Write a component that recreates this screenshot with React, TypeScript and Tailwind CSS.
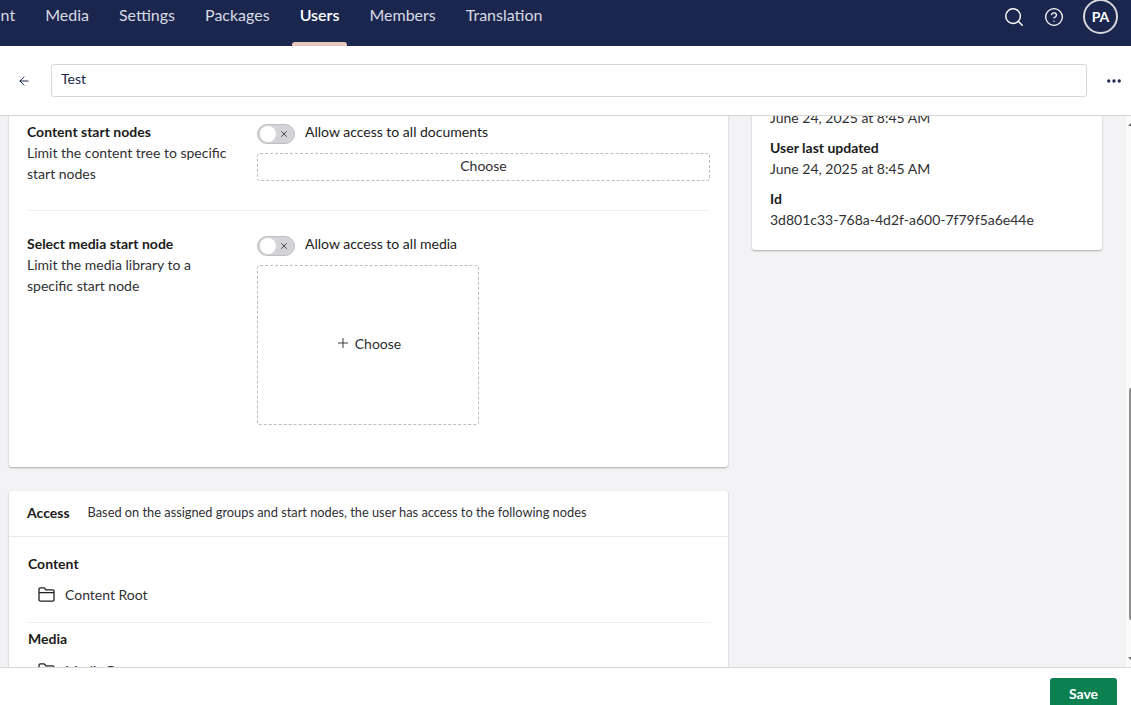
import { ArrowLeft, Ellipsis, CircleHelp, Search, Plus, X } from "lucide-react";

const tabs = ["Content", "Media", "Settings", "Packages", "Users", "Members", "Translation"];

function FolderIcon() {
  return (
    <svg width="17" height="15" viewBox="0 0 18 16" fill="none" strokeWidth="1.4" strokeLinejoin="round" className="shrink-0">
      <path d="M1 13.5V2.5A1.5 1.5 0 0 1 2.5 1h3.6c.5 0 .9.2 1.2.6L8.4 3h7.1A1.5 1.5 0 0 1 17 4.5v9a1.5 1.5 0 0 1-1.5 1.5h-13A1.5 1.5 0 0 1 1 13.5Z" stroke="#222" />
      <path d="M1 6h16" stroke="#222" />
    </svg>
  );
}

function Toggle({ label }: { label: string }) {
  return (
    <div className="flex items-start h-5 gap-[10px]">
      <div className="relative w-[38px] h-5 rounded-full bg-[#d4d4d8] border border-[#c0c0c4] shrink-0">
        <span className="absolute left-[2px] top-[1px] w-4 h-4 rounded-full bg-white" />
        <X className="absolute right-[5px] top-[4px] text-[#333]" size={10} strokeWidth={2} />
      </div>
      <span className="text-[14px] text-[#1b1b1b] -mt-[3px]">{label}</span>
    </div>
  );
}

export default function App() {
  return (
    <div className="w-[1131px] h-[705px] flex flex-col overflow-hidden bg-white text-[#1b264f] font-['Lato',sans-serif] text-[14px] leading-[21px]">
      <header className="h-[46px] shrink-0 bg-[#1b264f] flex items-start justify-between">
        <nav className="flex -ml-[57px] h-full">
          {tabs.map((t) => (
            <div
              key={t}
              className={`relative px-[15px] h-full pt-[4px] text-[16px] ${t === "Users" ? "text-white font-semibold" : "text-[#d9dbe3]"}`}
            >
              {t}
              {t === "Users" && (
                <span className="absolute left-[7px] right-[7px] bottom-0 h-1 rounded-t-[3px] bg-[#e9c8bb]" />
              )}
            </div>
          ))}
        </nav>
        <div className="flex items-center pr-[13px] gap-[19px] h-[35px] -mt-[1px]">
          <Search size={22} strokeWidth={1.6} className="text-white" />
          <CircleHelp size={20} strokeWidth={1.6} className="text-white" />
          <div className="w-[35px] h-[35px] rounded-full border-2 border-[#d8d8dc] flex items-center justify-center text-white font-bold text-[14px]">
            PA
          </div>
        </div>
      </header>

      <div className="h-[70px] shrink-0 bg-white border-b border-[#d8d7d9] flex items-center pl-[17px] pr-[8px]">
        <ArrowLeft size={14} strokeWidth={1.7} className="text-[#1b264f] mr-[20px] shrink-0" />
        <div className="flex-1 h-[33px] border border-[#d8d7d9] rounded-[3px] pl-[9px] pt-[3px] text-[14px] text-[#1b264f]">Test</div>
        <Ellipsis size={18} strokeWidth={2.4} className="text-[#1b264f] ml-[18px] shrink-0" />
      </div>

      <main className="flex-1 min-h-0 overflow-hidden bg-[#f3f3f5] flex">
        <div className="flex-1 min-w-0 overflow-hidden pl-[9px]">
          <div className="-mt-[28px] flex gap-6 items-start">
            <div className="w-[719px] shrink-0 flex flex-col gap-6">
              <section className="bg-white rounded-[3px] shadow-[0_1px_2px_rgba(0,0,0,0.3)] px-[18px] pt-[33px] h-[379px]">
                <div className="flex pb-[26px] border-b border-[#f0f0f2]">
                  <div className="w-[230px] shrink-0 pr-[25px]">
                    <div className="font-bold text-[#1b1b1b] h-[21px]">Content start nodes</div>
                    <p className="text-[#303033]">Limit the content tree to specific start nodes</p>
                  </div>
                  <div className="flex-1 flex flex-col gap-[9px] pt-[3px]">
                    <Toggle label="Allow access to all documents" />
                    <div className="h-7 border border-dashed border-[#bdbdc0] rounded-[3px] flex items-center justify-center pb-[3px] text-[#303033]">Choose</div>
                  </div>
                </div>
                <div className="flex pt-[22px]">
                  <div className="w-[230px] shrink-0 pr-[25px]">
                    <div className="font-bold text-[#1b1b1b] h-[21px]">Select media start node</div>
                    <p className="text-[#303033]">Limit the media library to a specific start node</p>
                  </div>
                  <div className="flex-1 flex flex-col gap-[9px] pt-[3px]">
                    <Toggle label="Allow access to all media" />
                    <div className="w-[222px] h-40 border border-dashed border-[#bdbdc0] rounded-[3px] flex items-center justify-center gap-1 pb-[4px] text-[#303033]">
                      <Plus size={16} strokeWidth={1.4} className="text-[#333]" />
                      Choose
                    </div>
                  </div>
                </div>
              </section>

              <section className="bg-white rounded-[3px] shadow-[0_1px_2px_rgba(0,0,0,0.3)] h-[200px]">
                <div className="h-[46px] border-b border-[#e9e9eb] flex items-center pl-[18px] pb-[2px] gap-[18px]">
                  <span className="font-bold text-[#1b1b1b] text-[14px]">Access</span>
                  <span className="text-[12.8px] text-[#303033]">Based on the assigned groups and start nodes, the user has access to the following nodes</span>
                </div>
                <div className="pl-[19px] pr-[17px] pt-[16px]">
                  <div className="font-bold text-[#1b1b1b] text-[14px]">Content</div>
                  <div className="flex items-center gap-[10px] pl-[10px] mt-[10px] pb-[17px] border-b border-[#f0f0f2]">
                    <FolderIcon />
                    <span className="text-[#303033]">Content Root</span>
                  </div>
                  <div className="font-bold text-[#1b1b1b] mt-[5px] text-[14px]">Media</div>
                  <div className="flex items-center gap-[10px] pl-[10px] mt-[11px]">
                    <FolderIcon />
                    <span className="text-[#303033]">Media Root</span>
                  </div>
                </div>
              </section>
            </div>

            <aside className="w-[350px] shrink-0 bg-white rounded-[3px] shadow-[0_1px_2px_rgba(0,0,0,0.3)] px-[18px] pt-[19px] h-[162px]">
              <div className="text-[#303033]">June 24, 2025 at 8:45 AM</div>
              <div className="font-bold text-[#1b1b1b] mt-[9px]">User last updated</div>
              <div className="text-[#303033]">June 24, 2025 at 8:45 AM</div>
              <div className="font-bold text-[#1b1b1b] mt-[9px]">Id</div>
              <div className="text-[#303033]">3d801c33-768a-4d2f-a600-7f79f5a6e44e</div>
            </aside>
          </div>
        </div>
        <div className="w-[5px] shrink-0 bg-[#fafafa] flex flex-col items-end pt-[7px]">
          <svg width="3" height="3" viewBox="0 0 3 3" className="mb-[262px]"><path d="M3 0v3H0Z" fill="#666" /></svg>
          <div className="w-[2px] h-[232px] bg-[#8f8f8f] rounded-l-[2px] mb-[37px]" />
          <svg width="3" height="3" viewBox="0 0 3 3"><path d="M3 3V0H0Z" fill="#666" /></svg>
        </div>
      </main>

      <footer className="h-[38px] shrink-0 bg-white border-t border-[#d8d7d9] flex justify-end pr-[14px] pt-[10px]">
        <div className="w-[67px] h-[36px] shrink-0 rounded-[3px] bg-[#0b8152] text-white font-bold text-[14px] flex items-start justify-center pt-[5px]">Save</div>
      </footer>
    </div>
  );
}
